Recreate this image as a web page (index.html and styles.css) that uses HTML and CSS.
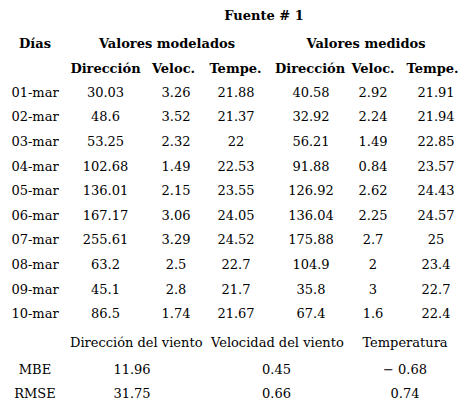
FILE: index.html
```html
<!doctype html>
<html>
  <head>
    <title>Fuente # 1</title>
    <link rel="stylesheet" href="styles.css">
  </head>
  <body>
    <table class="datos">
      <colgroup>
        <col class="c-dia" />
        <col class="c-dir" />
        <col class="c-vel" />
        <col class="c-tem" />
        <col class="c-dir2" />
        <col class="c-vel2" />
        <col class="c-tem2" />
      </colgroup>
      <tr class="fuente">
        <td></td>
        <th colspan="6">Fuente # 1</th>
      </tr>
      <tr class="grupo">
        <th>Días</th>
        <th colspan="3">Valores modelados</th>
        <th colspan="3">Valores medidos</th>
      </tr>
      <tr class="campos">
        <td></td>
        <th>Dirección</th>
        <th>Veloc.</th>
        <th>Tempe.</th>
        <th>Dirección</th>
        <th>Veloc.</th>
        <th>Tempe.</th>
      </tr>
      <tr class="fila"><td>01-mar</td><td>30.03</td><td>3.26</td><td>21.88</td><td>40.58</td><td>2.92</td><td>21.91</td></tr>
      <tr class="fila"><td>02-mar</td><td>48.6</td><td>3.52</td><td>21.37</td><td>32.92</td><td>2.24</td><td>21.94</td></tr>
      <tr class="fila"><td>03-mar</td><td>53.25</td><td>2.32</td><td>22</td><td>56.21</td><td>1.49</td><td>22.85</td></tr>
      <tr class="fila"><td>04-mar</td><td>102.68</td><td>1.49</td><td>22.53</td><td>91.88</td><td>0.84</td><td>23.57</td></tr>
      <tr class="fila"><td>05-mar</td><td>136.01</td><td>2.15</td><td>23.55</td><td>126.92</td><td>2.62</td><td>24.43</td></tr>
      <tr class="fila"><td>06-mar</td><td>167.17</td><td>3.06</td><td>24.05</td><td>136.04</td><td>2.25</td><td>24.57</td></tr>
      <tr class="fila"><td>07-mar</td><td>255.61</td><td>3.29</td><td>24.52</td><td>175.88</td><td>2.7</td><td>25</td></tr>
      <tr class="fila"><td>08-mar</td><td>63.2</td><td>2.5</td><td>22.7</td><td>104.9</td><td>2</td><td>23.4</td></tr>
      <tr class="fila"><td>09-mar</td><td>45.1</td><td>2.8</td><td>21.7</td><td>35.8</td><td>3</td><td>22.7</td></tr>
      <tr class="fila"><td>10-mar</td><td>86.5</td><td>1.74</td><td>21.67</td><td>67.4</td><td>1.6</td><td>22.4</td></tr>
      <tr class="errores etiquetas">
        <td></td>
        <td colspan="2">Dirección del viento</td>
        <td colspan="2">Velocidad del viento</td>
        <td colspan="2">Temperatura</td>
      </tr>
      <tr class="errores"><td>MBE</td><td colspan="2">11.96</td><td colspan="2">0.45</td><td colspan="2">&minus; 0.68</td></tr>
      <tr class="errores"><td>RMSE</td><td colspan="2">31.75</td><td colspan="2">0.66</td><td colspan="2">0.74</td></tr>
    </table>
  </body>
</html>
```

FILE: styles.css
```css
body {
  margin: 0;
  background: #fff;
  color: #000;
  font-family: "DejaVu Serif", serif;
  font-size: 13px;
}

.datos {
  width: 468px;
  table-layout: fixed;
  border-collapse: collapse;
}

.c-dia { width: 70px; }
.c-dir { width: 71px; }
.c-vel { width: 65px; }
.c-tem { width: 67px; }
.c-dir2 { width: 69px; }
.c-vel2 { width: 62px; }
.c-tem2 { width: 64px; }

.datos td,
.datos th {
  padding: 0;
  text-align: center;
  white-space: nowrap;
  height: 24.6px;
}

.datos th {
  font-weight: bold;
}

.fuente th,
.fuente td {
  height: 31px;
}
.fuente th {
  padding-right: 10px;
}

.grupo th {
  height: 25px;
}
.grupo th + th {
  padding-right: 9px;
}

.campos th,
.campos td {
  height: 24px;
}
.campos th:nth-child(4) { padding-right: 8px; }
.campos th:nth-child(5) { padding-left: 2px; }
.campos th:nth-child(7) { padding-right: 7px; }

/* nudge the value columns toward where the numbers sit */
.fila td:nth-child(3) { padding-left: 5px; }
.fila td:nth-child(4) { padding-right: 7px; }
.fila td:nth-child(5) { padding-left: 7px; }

.errores td:nth-child(2) { padding-right: 12px; }
.errores td:nth-child(3) { padding-left: 5px; }

.etiquetas td {
  height: 29px;
  padding-top: 2px;
}
```
